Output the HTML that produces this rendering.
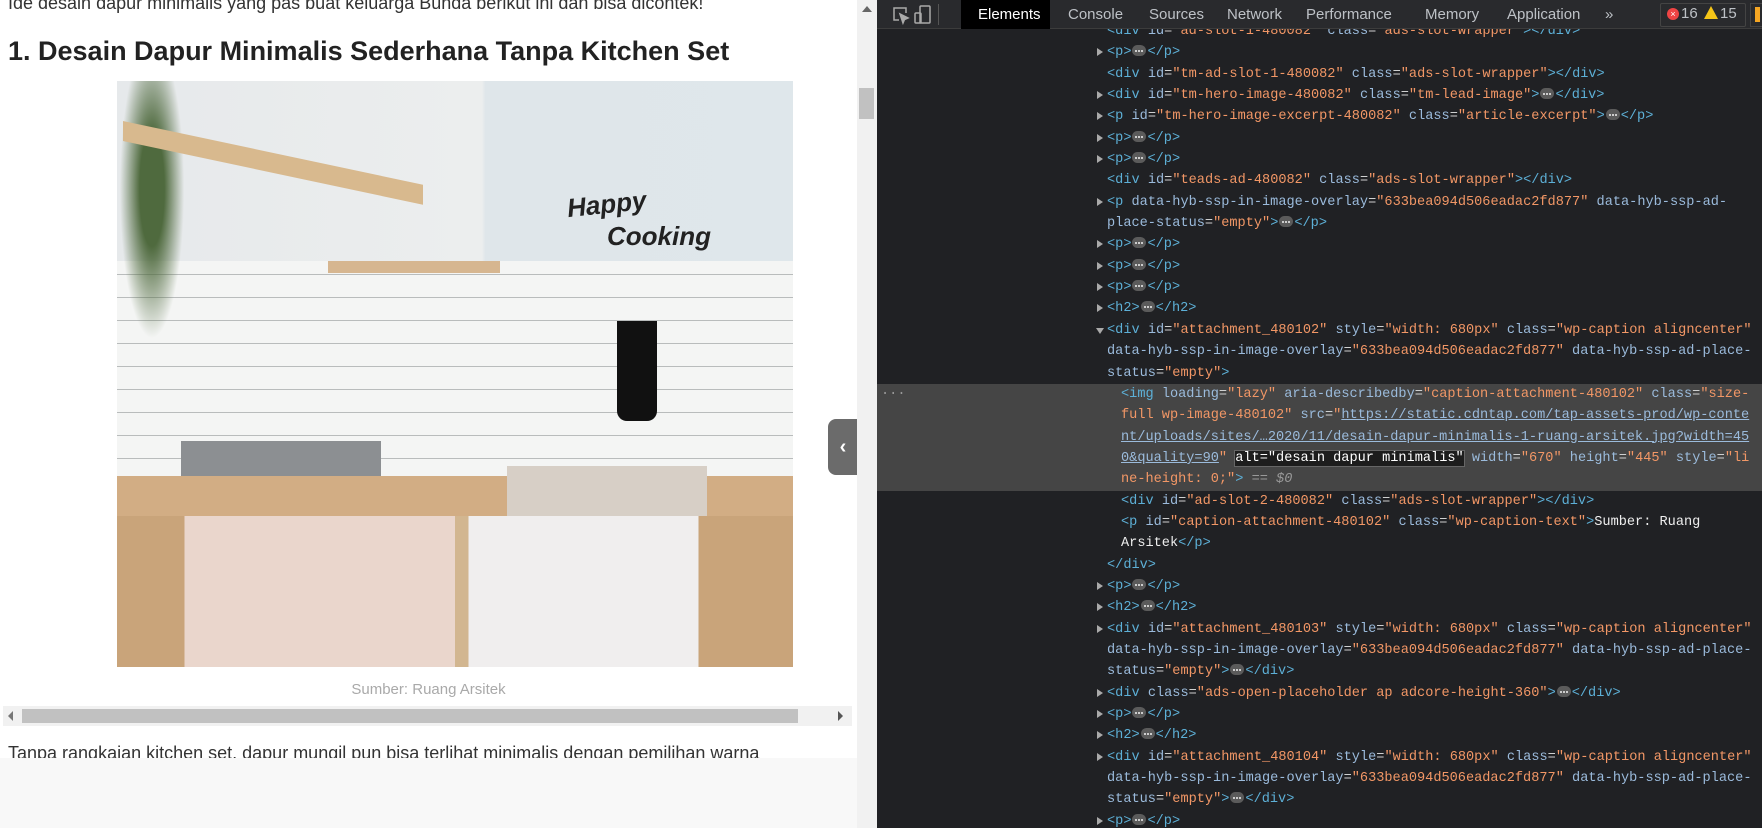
<!DOCTYPE html>
<html><head><meta charset="utf-8"><style>
*{margin:0;padding:0;box-sizing:border-box}
body{width:1762px;height:828px;overflow:hidden;background:#202124;position:relative;font-family:"Liberation Sans",sans-serif}
#left{position:absolute;left:0;top:0;width:857px;height:828px;background:#fff;overflow:hidden}
#vs{position:absolute;left:857px;top:0;width:20px;height:828px;background:#f1f1f1}
#dt{position:absolute;left:877px;top:0;width:885px;height:828px;background:#202124;overflow:hidden}
.code{position:absolute;left:0;top:21px;width:885px;font-family:"Liberation Mono",monospace;font-size:13.6px;line-height:21.35px;color:#cfd0d0}
.code>div{height:21.35px;position:relative;white-space:pre;padding-left:230px}
.code>div.n{padding-left:244px}
.t{color:#5db0d7}.a{color:#9bbbdc}.v{color:#f29766}.u{color:#9bbbdc;text-decoration:underline}
.tri{position:absolute;left:220px;top:6px;width:0;height:0;border-left:6px solid #aaa;border-top:4px solid transparent;border-bottom:4px solid transparent}
.trd{position:absolute;left:219px;top:8px;width:0;height:0;border-top:6px solid #aaa;border-left:4px solid transparent;border-right:4px solid transparent}
.e{display:inline-block;width:14px;height:11px;border-radius:6px;background:#5b5b5b;vertical-align:-1px;position:relative;margin:0 1px}
.e:after{content:"";position:absolute;left:3px;top:5px;width:8px;height:2px;background:repeating-linear-gradient(90deg,#ccc 0 2px,transparent 2px 3px)}
#tb{position:absolute;left:0;top:0;width:885px;height:29px;background:#292a2d;border-bottom:1px solid #3c3c3c;color:#bdc1c6;font-size:15px}
#tb span{position:absolute;top:6px}
</style></head><body>
<div id="left">
 <div style="position:absolute;left:8px;top:-7px;font-size:18px;color:#333">Ide desain dapur minimalis yang pas buat keluarga Bunda berikut ini dan bisa dicontek!</div>
 <div style="position:absolute;left:8px;top:36px;font-size:27px;font-weight:bold;color:#222">1. Desain Dapur Minimalis Sederhana Tanpa Kitchen Set</div>
 <div style="position:absolute;left:117px;top:81px;width:676px;height:586px;background:linear-gradient(90deg,#e6e9eb 0%,#eceeee 54%,#dfe6ea 54.5%,#dfe7eb 100%);overflow:hidden">
  <div style="position:absolute;left:0;top:180px;width:100%;height:220px;background:repeating-linear-gradient(0deg,#f4f5f4 0 22px,#b9bcbc 22px 23px)"></div>
  <div style="position:absolute;left:0;top:0;width:70px;height:270px;background:radial-gradient(ellipse at 50% 40%,#4f6a3e 25%,transparent 65%)"></div>
  <div style="position:absolute;left:6px;top:40px;width:300px;height:20px;background:#d8b98e;transform:skewY(12deg);transform-origin:0 0"></div>
  <div style="position:absolute;left:211px;top:180px;width:172px;height:12px;background:#d6b690"></div>
  <div style="position:absolute;left:450px;top:108px;font:bold 26px 'Liberation Sans',sans-serif;color:#222;transform:rotate(-6deg);font-style:italic">Happy</div>
  <div style="position:absolute;left:490px;top:140px;font:bold 26px 'Liberation Sans',sans-serif;color:#222;font-style:italic">Cooking</div>
  <div style="position:absolute;left:500px;top:240px;width:40px;height:100px;background:#111;border-radius:0 0 10px 10px"></div>
  <div style="position:absolute;left:64px;top:360px;width:200px;height:50px;background:#8c8f92"></div>
  <div style="position:absolute;left:0;top:395px;width:676px;height:40px;background:#d2ad84"></div>
  <div style="position:absolute;left:0;top:435px;width:676px;height:151px;background:linear-gradient(90deg,#c9a47a 0 10%,#ead6cc 10% 50%,#d2b690 50% 52%,#f0eeee 52% 86%,#c9a47a 86%)"></div>
  <div style="position:absolute;left:390px;top:385px;width:200px;height:50px;background:#d7cfc6"></div>
 </div>
 <div style="position:absolute;left:0;top:681px;width:857px;text-align:center;font-size:15px;color:#a9a9a9">Sumber: Ruang Arsitek</div>
 <div style="position:absolute;left:3px;top:706px;width:849px;height:20px;background:#f1f1f1"></div>
 <div style="position:absolute;left:22px;top:709px;width:776px;height:14px;background:#c1c1c1"></div>
 <div style="position:absolute;left:8px;top:711px;width:0;height:0;border-right:5px solid #777;border-top:5px solid transparent;border-bottom:5px solid transparent"></div>
 <div style="position:absolute;left:838px;top:711px;width:0;height:0;border-left:5px solid #555;border-top:5px solid transparent;border-bottom:5px solid transparent"></div>
 <div style="position:absolute;left:8px;top:743px;font-size:18px;color:#333;white-space:nowrap">Tanpa rangkaian kitchen set, dapur mungil pun bisa terlihat minimalis dengan pemilihan warna</div>
 <div style="position:absolute;left:0;top:758px;width:857px;height:70px;background:#f8f8f8"></div>
 <div style="position:absolute;left:828px;top:419px;width:30px;height:56px;background:#6b6b6b;border-radius:8px 0 0 8px;color:#fff;font-size:20px;font-weight:bold;line-height:56px;text-align:center">‹</div>
</div>
<div id="vs"><div style="position:absolute;left:5px;top:6px;border-bottom:6px solid #666;border-left:5px solid transparent;border-right:5px solid transparent"></div><div style="position:absolute;left:2px;top:88px;width:15px;height:31px;background:#c1c1c1"></div></div>
<div id="dt">
<div class="code"><div><span class="t">&lt;div</span> <span class="a">id</span>=<span class="v">"ad-slot-1-480082"</span> <span class="a">class</span>=<span class="v">"ads-slot-wrapper"</span><span class="t">&gt;&lt;/div&gt;</span></div><div><i class="tri"></i><span class="t">&lt;p&gt;</span><i class="e"></i><span class="t">&lt;/p&gt;</span></div><div><span class="t">&lt;div</span> <span class="a">id</span>=<span class="v">"tm-ad-slot-1-480082"</span> <span class="a">class</span>=<span class="v">"ads-slot-wrapper"</span><span class="t">&gt;&lt;/div&gt;</span></div><div><i class="tri"></i><span class="t">&lt;div</span> <span class="a">id</span>=<span class="v">"tm-hero-image-480082"</span> <span class="a">class</span>=<span class="v">"tm-lead-image"</span><span class="t">&gt;</span><i class="e"></i><span class="t">&lt;/div&gt;</span></div><div><i class="tri"></i><span class="t">&lt;p</span> <span class="a">id</span>=<span class="v">"tm-hero-image-excerpt-480082"</span> <span class="a">class</span>=<span class="v">"article-excerpt"</span><span class="t">&gt;</span><i class="e"></i><span class="t">&lt;/p&gt;</span></div><div><i class="tri"></i><span class="t">&lt;p&gt;</span><i class="e"></i><span class="t">&lt;/p&gt;</span></div><div><i class="tri"></i><span class="t">&lt;p&gt;</span><i class="e"></i><span class="t">&lt;/p&gt;</span></div><div><span class="t">&lt;div</span> <span class="a">id</span>=<span class="v">"teads-ad-480082"</span> <span class="a">class</span>=<span class="v">"ads-slot-wrapper"</span><span class="t">&gt;&lt;/div&gt;</span></div><div><i class="tri"></i><span class="t">&lt;p</span> <span class="a">data-hyb-ssp-in-image-overlay</span>=<span class="v">"633bea094d506eadac2fd877"</span> <span class="a">data-hyb-ssp-ad-</span></div><div><span class="a">place-status</span>=<span class="v">"empty"</span><span class="t">&gt;</span><i class="e"></i><span class="t">&lt;/p&gt;</span></div><div><i class="tri"></i><span class="t">&lt;p&gt;</span><i class="e"></i><span class="t">&lt;/p&gt;</span></div><div><i class="tri"></i><span class="t">&lt;p&gt;</span><i class="e"></i><span class="t">&lt;/p&gt;</span></div><div><i class="tri"></i><span class="t">&lt;p&gt;</span><i class="e"></i><span class="t">&lt;/p&gt;</span></div><div><i class="tri"></i><span class="t">&lt;h2&gt;</span><i class="e"></i><span class="t">&lt;/h2&gt;</span></div><div><i class="trd"></i><span class="t">&lt;div</span> <span class="a">id</span>=<span class="v">"attachment_480102"</span> <span class="a">style</span>=<span class="v">"width: 680px"</span> <span class="a">class</span>=<span class="v">"wp-caption aligncenter"</span></div><div><span class="a">data-hyb-ssp-in-image-overlay</span>=<span class="v">"633bea094d506eadac2fd877"</span> <span class="a">data-hyb-ssp-ad-place-</span></div><div><span class="a">status</span>=<span class="v">"empty"</span><span class="t">&gt;</span></div><div class="n" style="background:#454545"><span style="position:absolute;left:4px;color:#999">···</span><span class="t">&lt;img</span> <span class="a">loading</span>=<span class="v">"lazy"</span> <span class="a">aria-describedby</span>=<span class="v">"caption-attachment-480102"</span> <span class="a">class</span>=<span class="v">"size-</span></div><div class="n" style="background:#454545"><span class="v">full wp-image-480102"</span> <span class="a">src</span>=<span class="v">"</span><span class="u">https://static.cdntap.com/tap-assets-prod/wp-conte</span></div><div class="n" style="background:#454545"><span class="u">nt/uploads/sites/…2020/11/desain-dapur-minimalis-1-ruang-arsitek.jpg?width=45</span></div><div class="n" style="background:#454545"><span class="u">0&amp;quality=90</span><span class="v">"</span> <span style="background:#1d1d1d;outline:1px solid #666;color:#fff">alt="desain dapur minimalis"</span> <span class="a">width</span>=<span class="v">"670"</span> <span class="a">height</span>=<span class="v">"445"</span> <span class="a">style</span>=<span class="v">"li</span></div><div class="n" style="background:#454545"><span class="v">ne-height: 0;"</span><span class="t">&gt;</span> <span style="color:#999">== <i>$0</i></span></div><div class="n"><span class="t">&lt;div</span> <span class="a">id</span>=<span class="v">"ad-slot-2-480082"</span> <span class="a">class</span>=<span class="v">"ads-slot-wrapper"</span><span class="t">&gt;&lt;/div&gt;</span></div><div class="n"><span class="t">&lt;p</span> <span class="a">id</span>=<span class="v">"caption-attachment-480102"</span> <span class="a">class</span>=<span class="v">"wp-caption-text"</span><span class="t">&gt;</span><span style="color:#eee">Sumber: Ruang</span></div><div class="n"><span style="color:#eee">Arsitek</span><span class="t">&lt;/p&gt;</span></div><div><span class="t">&lt;/div&gt;</span></div><div><i class="tri"></i><span class="t">&lt;p&gt;</span><i class="e"></i><span class="t">&lt;/p&gt;</span></div><div><i class="tri"></i><span class="t">&lt;h2&gt;</span><i class="e"></i><span class="t">&lt;/h2&gt;</span></div><div><i class="tri"></i><span class="t">&lt;div</span> <span class="a">id</span>=<span class="v">"attachment_480103"</span> <span class="a">style</span>=<span class="v">"width: 680px"</span> <span class="a">class</span>=<span class="v">"wp-caption aligncenter"</span></div><div><span class="a">data-hyb-ssp-in-image-overlay</span>=<span class="v">"633bea094d506eadac2fd877"</span> <span class="a">data-hyb-ssp-ad-place-</span></div><div><span class="a">status</span>=<span class="v">"empty"</span><span class="t">&gt;</span><i class="e"></i><span class="t">&lt;/div&gt;</span></div><div><i class="tri"></i><span class="t">&lt;div</span> <span class="a">class</span>=<span class="v">"ads-open-placeholder ap adcore-height-360"</span><span class="t">&gt;</span><i class="e"></i><span class="t">&lt;/div&gt;</span></div><div><i class="tri"></i><span class="t">&lt;p&gt;</span><i class="e"></i><span class="t">&lt;/p&gt;</span></div><div><i class="tri"></i><span class="t">&lt;h2&gt;</span><i class="e"></i><span class="t">&lt;/h2&gt;</span></div><div><i class="tri"></i><span class="t">&lt;div</span> <span class="a">id</span>=<span class="v">"attachment_480104"</span> <span class="a">style</span>=<span class="v">"width: 680px"</span> <span class="a">class</span>=<span class="v">"wp-caption aligncenter"</span></div><div><span class="a">data-hyb-ssp-in-image-overlay</span>=<span class="v">"633bea094d506eadac2fd877"</span> <span class="a">data-hyb-ssp-ad-place-</span></div><div><span class="a">status</span>=<span class="v">"empty"</span><span class="t">&gt;</span><i class="e"></i><span class="t">&lt;/div&gt;</span></div><div><i class="tri"></i><span class="t">&lt;p&gt;</span><i class="e"></i><span class="t">&lt;/p&gt;</span></div></div>
<div id="tb">
 <svg style="position:absolute;left:14px;top:5px" width="20" height="20" viewBox="0 0 20 20" fill="none" stroke="#aaa" stroke-width="1.5"><path d="M8 15H3V3h12v5"/><path d="M9 9l3 9 1.5-3.5L17 13z" fill="#aaa"/></svg>
 <svg style="position:absolute;left:36px;top:4px" width="20" height="22" viewBox="0 0 20 22" fill="none" stroke="#aaa" stroke-width="1.5"><rect x="7" y="2" width="10" height="17" rx="1"/><rect x="2" y="9" width="6" height="10" rx="1"/></svg>
 <div style="position:absolute;left:61px;top:4px;width:1px;height:21px;background:#555"></div>
 <div style="position:absolute;left:84px;top:0;width:89px;height:29px;background:#000"></div>
 <span style="left:101px;color:#fff">Elements</span>
 <span style="left:191px">Console</span>
 <span style="left:272px">Sources</span>
 <span style="left:350px">Network</span>
 <span style="left:429px">Performance</span>
 <span style="left:548px">Memory</span>
 <span style="left:630px">Application</span>
 <span style="left:728px">»</span>
 <div style="position:absolute;left:783px;top:3px;width:86px;height:24px;border:1px solid #444;border-radius:2px"></div>
 <span style="left:790px;top:8px;width:12px;height:12px;border-radius:50%;background:#e44;color:#fff;font-size:9px;line-height:12px;text-align:center">×</span>
 <span style="left:804px;top:5px">16</span>
 <span style="left:827px;top:6px;width:0;height:0;border-bottom:13px solid #f5c518;border-left:7px solid transparent;border-right:7px solid transparent"></span>
 <span style="left:843px;top:5px">15</span>
 <div style="position:absolute;left:873px;top:3px;width:20px;height:24px;border:1px solid #444"></div>
 <div style="position:absolute;left:878px;top:7px;width:5px;height:15px;background:#f5a623"></div>
</div>
</div>
</body></html>
